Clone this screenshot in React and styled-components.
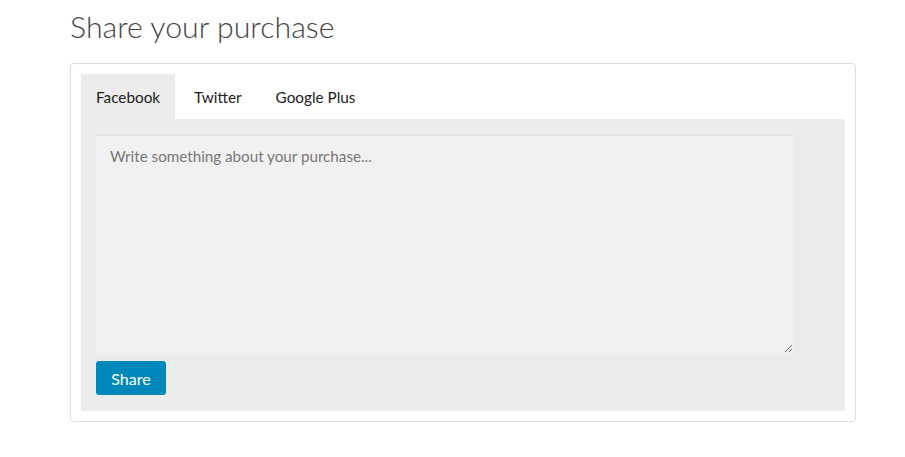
import React, { useState } from 'react'
import styled, { createGlobalStyle } from 'styled-components'

const GlobalStyle = createGlobalStyle`
  body {
    margin: 0;
    background: #fff;
    font-family: Lato, "Open Sans", sans-serif;
    color: #333;
  }
`;

const Page = styled.div`
  width: 786px;
  padding: 6px 0 0 70px;
`;

const Title = styled.h1`
  margin: 0 0 17px 0;
  font-family: Lato, "Open Sans", sans-serif;
  font-weight: 300;
  font-size: 30.3px;
  line-height: 40px;
  color: #444;
`;

const Card = styled.div`
  border: 1px solid #dedede;
  border-radius: 4px;
  padding: 10px 10px 10px 10px;
`;

const TabBar = styled.div`
  display: flex;
  height: 45px;
`;

const Tab = styled.button`
  border: none;
  margin: 0 4px 0 0;
  padding: 0 15px;
  font-family: Lato, "Open Sans", sans-serif;
  font-size: 15.3px;
  color: #222;
  cursor: pointer;
  background: ${(p) => (p.$active ? '#ececec' : '#fff')};
`;

const Panel = styled.div`
  background: #ececec;
  padding: 15px 15px 16px;
  display: flex;
  flex-direction: column;
  gap: 8px;
`;

const TextArea = styled.textarea`
  width: 697px;
  height: 219px;
  box-sizing: border-box;
  background: #f1f1f1;
  border: none;
  border-top: 2px solid #e4e4e4;
  padding: 11px 14px;
  font-family: Lato, "Open Sans", sans-serif;
  font-size: 15.2px;
  color: #333;
  outline: none;
  &::placeholder {
    color: #777;
  }
`;

const ShareButton = styled.button`
  align-self: flex-start;
  width: 70px;
  height: 34px;
  background: #0088bb;
  color: #fff;
  border: none;
  border-radius: 3px;
  font-family: Lato, "Open Sans", sans-serif;
  font-size: 16px;
  cursor: pointer;
`;

const tabs = ['Facebook', 'Twitter', 'Google Plus'];

const App = () => {
  const [active, setActive] = useState(0);
  return (
    <Page>
      <GlobalStyle />
      <Title>Share your purchase</Title>
      <Card>
        <TabBar>
          {tabs.map((t, i) => (
            <Tab key={t} $active={i === active} onClick={() => setActive(i)}>
              {t}
            </Tab>
          ))}
        </TabBar>
        <Panel>
          <TextArea placeholder="Write something about your purchase..." />
          <ShareButton>Share</ShareButton>
        </Panel>
      </Card>
    </Page>
  );
}

export default App;
